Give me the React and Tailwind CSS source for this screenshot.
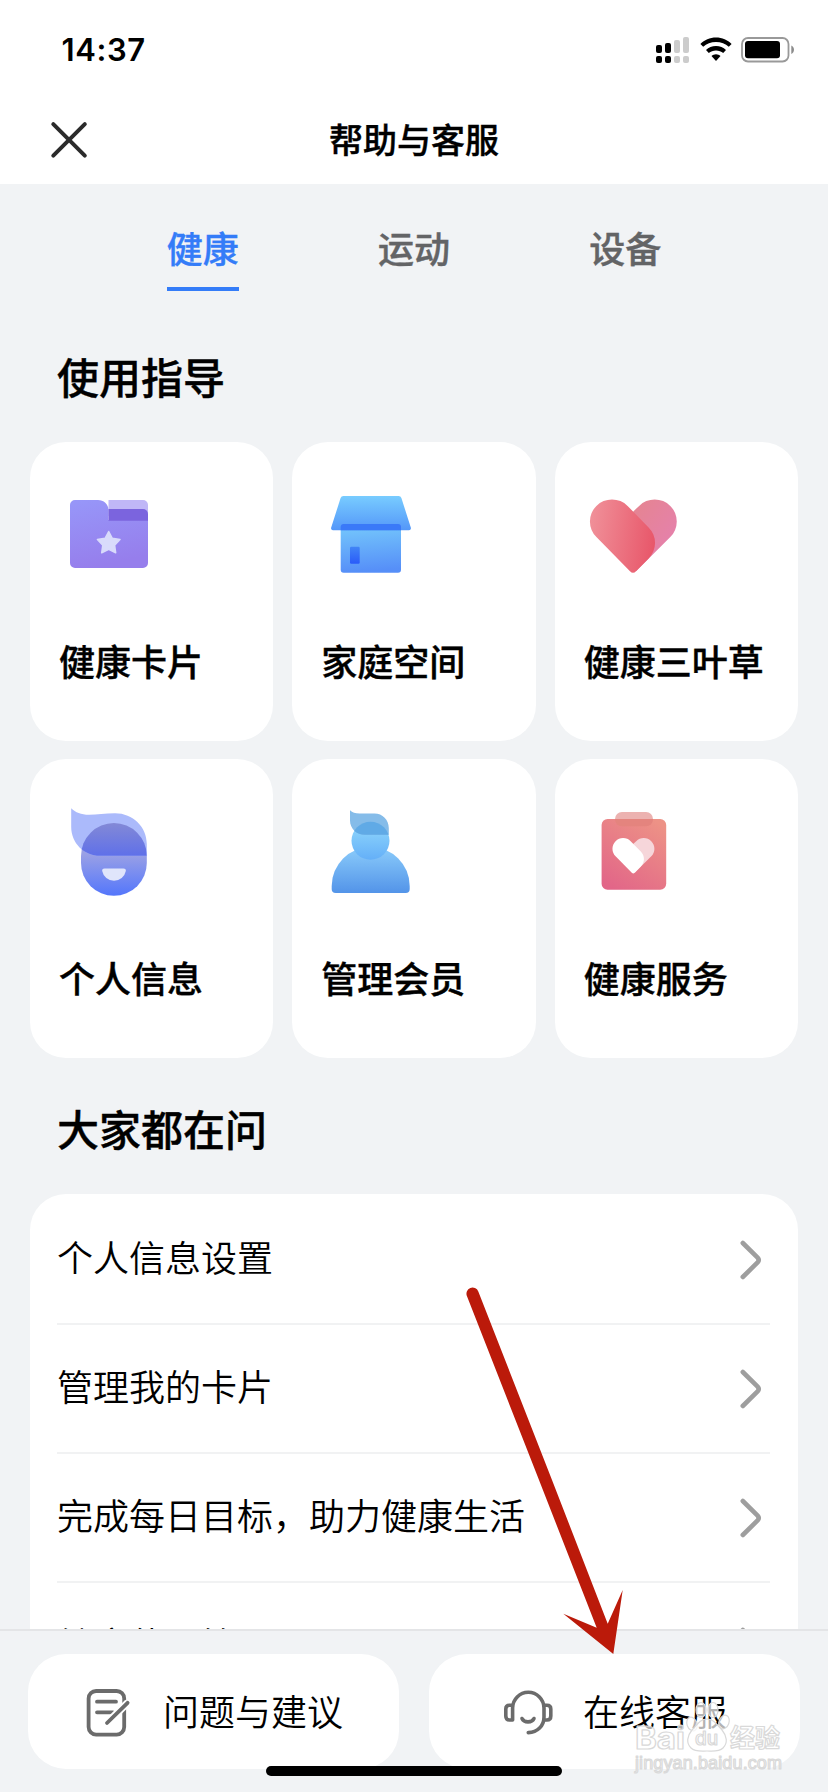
import React from "react";

const statusTop = [
  { x: 0, y: 8, on: true },
  { x: 9, y: 6, on: true },
  { x: 18, y: 3, on: false },
  { x: 27, y: 0, on: false },
];

function StatusBar() {
  return (
    <div className="flex h-24 items-center justify-between pt-1 pr-[33px] pl-[61.5px]">
      <span className="pb-0.5 font-[Inter,sans-serif] text-[31px] leading-none font-semibold tracking-[0.6px]">14:37</span>
      <div className="flex items-center">
        <svg className="h-[26px] w-[33px]" viewBox="0 0 33 26">
          {statusTop.map((b) => (
            <g key={b.x} fill={b.on ? "#000" : "#ccc"}>
              <rect x={b.x} y={b.y} width="6" height={16 - b.y} rx="2" />
              <rect x={b.x} y="19" width="6" height="7" rx="2" />
            </g>
          ))}
        </svg>
        <svg className="ml-[11px] h-[26px] w-8" viewBox="0 0 32 26">
          <path d="M16 0.5C22.2 0.5 27.6 3 31.6 6.9L28.8 9.8C25.5 6.5 21 5 16 5S6.5 6.5 3.2 9.8L0.4 6.9C4.4 3 9.8 0.5 16 0.5Z" />
          <path d="M16 9C19.9 9 23.4 10.5 26 13L23.2 15.9C21.3 14.4 18.8 13.5 16 13.5S10.7 14.4 8.8 15.9L6 13C8.6 10.5 12.1 9 16 9Z" />
          <path d="M16 17.3C17.7 17.3 19.3 18 20.5 19.1L16 24L11.5 19.1C12.7 18 14.3 17.3 16 17.3Z" />
        </svg>
        <svg className="ml-[9px] h-[26px] w-[54px]" viewBox="0 0 54 26">
          <rect x="1" y="1" width="46.5" height="23.5" rx="6" fill="none" stroke="#999" strokeWidth="1.8" />
          <rect x="4" y="4" width="35" height="17.2" rx="3" />
          <path d="M50.3 8.5C52 9.3 53 10.9 53 12.7S52 16.1 50.3 16.9Z" fill="#8c8c8c" />
        </svg>
      </div>
    </div>
  );
}

function FolderIcon() {
  return (
    <svg className="size-[100px]" viewBox="0 0 100 100">
      <defs>
        <linearGradient id="fo" x1="0" y1="0" x2="0.25" y2="1">
          <stop offset="0" stopColor="#9797f9" />
          <stop offset="1" stopColor="#967eec" />
        </linearGradient>
      </defs>
      <path d="M49.5 16H84a5 5 0 0 1 5 5V32H49.5Z" fill="#c0b7f7" />
      <path d="M16 16H39C44.5 16 49.5 20 49.5 26V36H89V79a5 5 0 0 1-5 5H16a5 5 0 0 1-5-5V21a5 5 0 0 1 5-5Z" fill="url(#fo)" />
      <path d="M49.5 25H84a5 5 0 0 1 5 5V36.7H49.5Z" fill="#7b64de" />
      <path d="M49.7 47.5L53.3 54.3L61 55.6L55.6 61.2L56.7 68.8L49.7 65.4L42.7 68.8L43.8 61.2L38.4 55.6L46.1 54.3Z" fill="#d9dbfb" stroke="#d9dbfb" strokeWidth="1.5" strokeLinejoin="round" />
    </svg>
  );
}

function HouseIcon() {
  return (
    <svg className="size-[100px]" viewBox="0 0 100 100">
      <defs>
        <linearGradient id="hr" x1="0" y1="0" x2="0" y2="1">
          <stop offset="0" stopColor="#78ccff" />
          <stop offset="1" stopColor="#5497f9" />
        </linearGradient>
        <linearGradient id="hw" x1="0" y1="0" x2="0.1" y2="1">
          <stop offset="0" stopColor="#76cafc" />
          <stop offset="1" stopColor="#568ff8" />
        </linearGradient>
        <linearGradient id="hd" x1="0" y1="0" x2="0" y2="1">
          <stop offset="0" stopColor="#4185f6" />
          <stop offset="1" stopColor="#2a5bf9" />
        </linearGradient>
      </defs>
      <rect x="19.7" y="40" width="60.3" height="48.8" rx="3" fill="url(#hw)" />
      <path d="M22.4 12H77.6a3 3 0 0 1 2.8 2L89.8 43.5a2 2 0 0 1-2 2.7H12.2a2 2 0 0 1-2-2.7L19.6 14a3 3 0 0 1 2.8-2Z" fill="url(#hr)" />
      <path d="M19.7 46.2V43a3 3 0 0 1 3-3H77a3 3 0 0 1 3 3v3.2Z" fill="#3a79f8" />
      <rect x="29" y="62.7" width="9.7" height="17" rx="1.2" fill="url(#hd)" />
    </svg>
  );
}

const leftLobe =
  "M12.4 53.1A22 22 0 1 1 43.6 21.9L64.6 43.4A22 22 0 0 1 64.6 74.5L52 87.3Q49 90.3 46 87.3Z";
const rightLobe =
  "M49.3 27.4L55.1 21.9A22 22 0 0 1 86.3 53.1L52 87.3L40 60Z";

function HeartIcon() {
  return (
    <svg className="size-[100px]" viewBox="0 0 100 100">
      <defs>
        <linearGradient id="ha" x1="0" y1="0.4" x2="1" y2="0.55">
          <stop offset="0" stopColor="#f08f98" />
          <stop offset="1" stopColor="#e8576a" />
        </linearGradient>
        <linearGradient id="hb" x1="0.3" y1="0" x2="0.9" y2="0.6">
          <stop offset="0" stopColor="#e58492" />
          <stop offset="1" stopColor="#e581ab" />
        </linearGradient>
      </defs>
      <path d={rightLobe} fill="url(#hb)" />
      <path d={leftLobe} fill="url(#ha)" />
    </svg>
  );
}

const faceHair =
  "M12.2 7.3C16.5 11.5 22 13.8 30 13.8C38 13.8 46 12.3 56 12.3C74 12.3 87.8 26 87.8 43V54.8H41C25 54.8 12.2 42 12.2 26Z";

function FaceIcon() {
  return (
    <svg className="size-[100px]" viewBox="0 0 100 100">
      <defs>
        <linearGradient id="fa" gradientUnits="userSpaceOnUse" x1="0" y1="52" x2="0" y2="94">
          <stop offset="0" stopColor="#9ba1e5" />
          <stop offset="1" stopColor="#5577fb" />
        </linearGradient>
        <linearGradient id="fb" gradientUnits="userSpaceOnUse" x1="0" y1="22" x2="0" y2="55">
          <stop offset="0" stopColor="#8389d6" />
          <stop offset="1" stopColor="#5f70e9" />
        </linearGradient>
        <clipPath id="fc">
          <path d={faceHair} />
        </clipPath>
      </defs>
      <rect x="22" y="22" width="65.8" height="72.8" rx="32.9" fill="url(#fa)" />
      <path d={faceHair} fill="#abbafb" />
      <rect x="22" y="22" width="65.8" height="72.8" rx="32.9" fill="url(#fb)" clipPath="url(#fc)" />
      <path d="M45.5 67.5H64.5Q67.2 67.5 66.8 70A12 12 0 0 1 43.2 70Q42.8 67.5 45.5 67.5Z" fill="#e0e5fb" />
    </svg>
  );
}

const memberHair =
  "M29 9.3C31.5 11.6 34 12.5 38.5 12.5H53.5C61.5 12.5 67.8 18.8 67.8 27V33.8H44C35.5 33.8 29 27.5 29 19.5Z";

function MemberIcon() {
  return (
    <svg className="size-[100px]" viewBox="0 0 100 100">
      <defs>
        <linearGradient id="ma" gradientUnits="userSpaceOnUse" x1="0" y1="48" x2="0" y2="91">
          <stop offset="0" stopColor="#89cafa" />
          <stop offset="1" stopColor="#5495e9" />
        </linearGradient>
        <linearGradient id="mb" gradientUnits="userSpaceOnUse" x1="0" y1="30" x2="0" y2="59">
          <stop offset="0" stopColor="#87cffb" />
          <stop offset="1" stopColor="#64aff8" />
        </linearGradient>
        <clipPath id="mc">
          <path d={memberHair} />
        </clipPath>
      </defs>
      <path d="M10.7 85A39 39 0 0 1 88.7 85V88a4 4 0 0 1-4 4H14.7a4 4 0 0 1-4-4Z" fill="url(#ma)" />
      <circle cx="49.5" cy="39.8" r="19" fill="url(#mb)" />
      <path d={memberHair} fill="#85bce9" />
      <circle cx="49.5" cy="39.8" r="19" fill="#60aae6" clipPath="url(#mc)" />
    </svg>
  );
}

function ClipboardIcon() {
  return (
    <svg className="size-[100px]" viewBox="0 0 100 100">
      <defs>
        <linearGradient id="ca" x1="0.2" y1="1" x2="0.8" y2="0">
          <stop offset="0" stopColor="#e26688" />
          <stop offset="1" stopColor="#ed9286" />
        </linearGradient>
        <clipPath id="cb">
          <rect x="17.6" y="18" width="64.6" height="70.7" />
        </clipPath>
      </defs>
      <rect x="31" y="11" width="38" height="14.3" rx="7" fill="#ecb2b0" />
      <rect x="17.6" y="18" width="64.6" height="70.7" rx="6" fill="url(#ca)" />
      <rect x="31" y="11" width="38" height="14.3" rx="7" fill="#e4847e" clipPath="url(#cb)" />
      <g transform="translate(25.6 29.6) scale(0.483)">
        <path d={rightLobe} fill="#f6d6da" />
        <path d={leftLobe} fill="#fff" />
      </g>
    </svg>
  );
}

const cards = [
  { label: "健康卡片", Icon: FolderIcon },
  { label: "家庭空间", Icon: HouseIcon },
  { label: "健康三叶草", Icon: HeartIcon },
  { label: "个人信息", Icon: FaceIcon },
  { label: "管理会员", Icon: MemberIcon },
  { label: "健康服务", Icon: ClipboardIcon },
];

const questions = ["个人信息设置", "管理我的卡片", "完成每日目标，助力健康生活", "健康使用管理"];

function Chevron() {
  return (
    <svg className="h-10 w-[22px]" viewBox="0 0 22 40" fill="none" stroke="#9e9e9e" strokeWidth="4.6" strokeLinecap="round" strokeLinejoin="round">
      <path d="M2.8 3L17.6 17.6Q19.8 20 17.6 22.4L2.8 37" />
    </svg>
  );
}

function NoteIcon() {
  return (
    <svg className="h-[52px] w-12" viewBox="0 0 48 52" fill="none" stroke="#6b6b6b" strokeWidth="3.8" strokeLinecap="round">
      <rect x="4.6" y="5" width="35.6" height="43.6" rx="7.5" />
      <path d="M13 15.7H32M13 26.3H29" />
      <path d="M23 37L44 16.3" stroke="#fff" strokeWidth="7.5" strokeLinecap="butt" />
      <path d="M23 37L43.6 16.8" />
    </svg>
  );
}

function HeadsetIcon() {
  return (
    <svg className="h-[52px] w-[54px]" viewBox="0 0 54 52" fill="none" stroke="#6b6b6b" strokeWidth="3.6" strokeLinecap="round" strokeLinejoin="round">
      <path d="M27.3 46.6C36.5 46.3 43 40 43 31V22A15.7 15.7 0 0 0 11.6 22V34H8.4Q4.8 34 4.8 30V23Q4.8 19.3 8.4 19.3H11.6" />
      <path d="M43 19.3H46Q49.8 19.3 49.8 23V30Q49.8 34 46 34H43" />
      <path d="M21 32.5C23 37 31 37 33 32.5" />
    </svg>
  );
}

function Watermark() {
  return (
    <svg className="pointer-events-none absolute top-[1695px] left-[625px] h-[85px] w-[170px]" viewBox="0 0 170 85">
      <g fill="#fff" fillOpacity="0.7" stroke="#d9d9d9" strokeWidth="1.2" strokeLinejoin="round">
        <ellipse cx="67" cy="29" rx="5" ry="7" transform="rotate(-20 67 29)" />
        <ellipse cx="76" cy="15" rx="5" ry="7.5" />
        <ellipse cx="88" cy="15" rx="5" ry="7.5" />
        <ellipse cx="99" cy="27" rx="5" ry="7" transform="rotate(20 99 27)" />
        <path d="M82 24C89 24 92 30 97 35C102 41 103 48 98 53C94 57 88 56 82 56S70 57 66 53C61 48 62 41 67 35C72 30 75 24 82 24Z" />
        <text x="10" y="54" fontFamily="Inter, sans-serif" fontWeight="700" fontSize="31" textLength="50" lengthAdjust="spacingAndGlyphs">Bai</text>
        <text x="70" y="50" fontFamily="Inter, sans-serif" fontWeight="500" fontSize="19">du</text>
        <text x="105" y="52" fontFamily="'Noto Sans CJK SC', sans-serif" fontWeight="700" fontSize="25">经验</text>
        <text x="10" y="74" fontFamily="'Liberation Sans', sans-serif" fontSize="18" textLength="147">jingyan.baidu.com</text>
      </g>
    </svg>
  );
}

export default function App() {
  return (
    <div className="relative flex h-[1792px] w-[828px] flex-col overflow-hidden bg-[#f1f3f5] font-['Noto_Sans_CJK_SC',sans-serif] text-black">
      <header className="h-[184px] shrink-0 bg-white">
        <StatusBar />
        <div className="grid h-[88px] grid-cols-[130px_1fr_130px] items-center">
          <svg className="ml-[49px] size-10" viewBox="0 0 40 40" stroke="#2b2b2b" strokeWidth="4" strokeLinecap="round">
            <path d="M4.3 4.2L35.8 35.6M35.8 4.2L4.3 35.6" />
          </svg>
          <h1 className="pb-[3px] text-center text-[34px] leading-none font-medium [-webkit-text-stroke:0.4px]">帮助与客服</h1>
        </div>
      </header>

      <main className="min-h-0 flex-1 overflow-hidden">
        <nav className="mx-[97px] grid h-[107px] grid-cols-3 justify-items-center text-[36px] font-medium text-[#636466] [-webkit-text-stroke:0.4px]">
          <button className="flex h-full items-center border-b-4 border-[#347cf8] pt-[22px] text-[#347cf8]">健康</button>
          <button className="flex h-full items-center border-b-4 border-transparent pt-[22px]">运动</button>
          <button className="flex h-full items-center border-b-4 border-transparent pt-[22px]">设备</button>
        </nav>

        <h2 className="mt-16 ml-[57px] text-[42px] leading-[42px] font-medium [-webkit-text-stroke:0.4px]">使用指导</h2>
        <div className="mx-[30px] mt-[45px] grid grid-cols-3 gap-x-[19px] gap-y-[18px]">
          {cards.map(({ label, Icon }) => (
            <section key={label} className="flex h-[299px] flex-col rounded-[36px] bg-white pt-[42px] pl-[29px]">
              <Icon />
              <h3 className="mt-[58px] text-[36px] leading-[36px] font-medium whitespace-nowrap [-webkit-text-stroke:0.4px]">{label}</h3>
            </section>
          ))}
        </div>

        <h2 className="mt-[49px] ml-[57px] text-[42px] leading-[42px] font-medium [-webkit-text-stroke:0.4px]">大家都在问</h2>
        <ul className="mx-[30px] mt-[45px] rounded-t-[36px] bg-white pt-0.5 pr-7 pl-[27px]">
          {questions.map((q) => (
            <li key={q} className="flex h-[129px] items-center justify-between border-b-2 border-[#f1f2f3] pr-2 text-[36px] leading-none font-[350]">
              <span className="pb-[7px]">{q}</span>
              <Chevron />
            </li>
          ))}
        </ul>
      </main>

      <footer className="grid h-[163px] shrink-0 grid-cols-2 content-start gap-[30px] border-t-2 border-[#e4e5e7] bg-[#f1f3f5] px-7 pt-[23px]">
        <button className="flex h-[115px] items-center rounded-[38px] bg-white pl-14 text-[36px] leading-none font-[350]">
          <NoteIcon />
          <span className="ml-[31px] pb-[3px]">问题与建议</span>
        </button>
        <button className="flex h-[115px] items-center rounded-[38px] bg-white pl-[72px] text-[36px] leading-none font-[350]">
          <HeadsetIcon />
          <span className="ml-[28px] pb-[3px]">在线客服</span>
        </button>
      </footer>

      <div className="absolute top-[1766px] left-[266px] h-2.5 w-[296px] rounded-full bg-black" />
      <svg className="pointer-events-none absolute top-[1280px] left-[460px] h-[380px] w-[170px]" viewBox="460 1280 170 380" fill="#bb1a0a">
        <path d="M466.9 1296A6 6 0 0 1 478.3 1291.4L552 1480L607.7 1623.7L622.7 1590L613.3 1654L563.3 1613.7L596.7 1627.7L539 1480Z" />
      </svg>
      <Watermark />
    </div>
  );
}
